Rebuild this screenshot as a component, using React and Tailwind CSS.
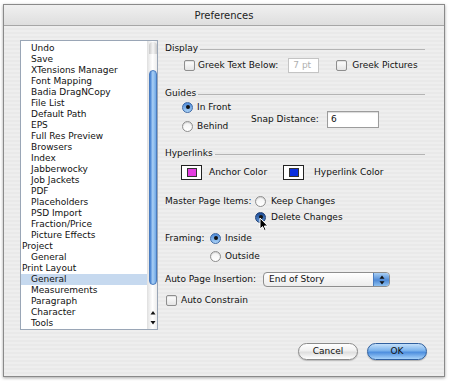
import React from 'react';

const listItems = [
  { label: 'Undo', indent: true },
  { label: 'Save', indent: true },
  { label: 'XTensions Manager', indent: true },
  { label: 'Font Mapping', indent: true },
  { label: 'Badia DragNCopy', indent: true },
  { label: 'File List', indent: true },
  { label: 'Default Path', indent: true },
  { label: 'EPS', indent: true },
  { label: 'Full Res Preview', indent: true },
  { label: 'Browsers', indent: true },
  { label: 'Index', indent: true },
  { label: 'Jabberwocky', indent: true },
  { label: 'Job Jackets', indent: true },
  { label: 'PDF', indent: true },
  { label: 'Placeholders', indent: true },
  { label: 'PSD Import', indent: true },
  { label: 'Fraction/Price', indent: true },
  { label: 'Picture Effects', indent: true },
  { label: 'Project', indent: false },
  { label: 'General', indent: true },
  { label: 'Print Layout', indent: false },
  { label: 'General', indent: true, selected: true },
  { label: 'Measurements', indent: true },
  { label: 'Paragraph', indent: true },
  { label: 'Character', indent: true },
  { label: 'Tools', indent: true },
];

function Checkbox() {
  return (
    <div className="w-[11px] h-[11px] shrink-0 rounded-[2px] border border-[#8e8e8e] bg-[linear-gradient(to_bottom,#ffffff,#e4e4e4)] shadow-[inset_0_1px_1px_rgba(0,0,0,0.12)]" />
  );
}

function Radio({ checked, pressed }) {
  if (checked) {
    return (
      <div
        className={
          'w-[11px] h-[11px] shrink-0 rounded-full border flex items-center justify-center ' +
          (pressed
            ? 'border-[#1f3f75] bg-[linear-gradient(to_bottom,#1d4c96,#5b8fd0)]'
            : 'border-[#3f6aa6] bg-[linear-gradient(to_bottom,#4e8ad8,#a9d1f6)]')
        }
      >
        <div className="w-[4px] h-[4px] rounded-full bg-[#111]" />
      </div>
    );
  }
  return (
    <div className="w-[11px] h-[11px] shrink-0 rounded-full border border-[#8e8e8e] bg-[linear-gradient(to_bottom,#f2f2f2,#ffffff)] shadow-[inset_0_1px_1px_rgba(0,0,0,0.15)]" />
  );
}

function SectionHeader({ title }) {
  return (
    <div className="flex items-center h-[16px]">
      <span>{title}</span>
      <div className="flex-1 h-px bg-[#b4b4b4] ml-[2px] mt-[3px]" />
    </div>
  );
}

function Swatch({ color }) {
  return (
    <div className="w-[21px] h-[15px] shrink-0 border border-[#222] bg-white flex items-center justify-center">
      <div className={'w-[10px] h-[9px] border border-[#333] ' + color} />
    </div>
  );
}

export default function App() {
  return (
    <div className="w-[450px] h-[381px] bg-white overflow-hidden relative text-[9px] leading-[11px] text-[#111] font-['DejaVu_Sans',sans-serif]">
      <div className="ml-[3px] mt-[4px] w-[442px] h-[373px] border border-[#8a8a8a] flex flex-col shadow-[0_1px_3px_rgba(0,0,0,0.35)]">
        {/* Title bar */}
        <div className="h-[21px] shrink-0 flex items-center justify-center border-b border-[#a6a6a6] bg-[linear-gradient(to_bottom,#f0f0f0,#dedede)] text-[10px] text-[#222]">
          Preferences
        </div>

        {/* Body */}
        <div className="flex-1 flex flex-col bg-[image:repeating-linear-gradient(to_bottom,#eeeeee_0px,#eeeeee_2px,#e9e9e9_2px,#e9e9e9_4px)]">
          <div className="flex items-start pt-[14px]">
            {/* Category list */}
            <div className="ml-[16px] w-[138px] h-[290px] shrink-0 border border-[#9aa6b6] bg-white flex">
              <div className="flex-1 pt-[2px]">
                {listItems.map((item, i) => (
                  <div
                    key={i}
                    className={
                      'h-[11px] leading-[11px] whitespace-nowrap ' +
                      (item.indent ? 'pl-[10px] ' : 'pl-[1px] ') +
                      (item.selected ? 'bg-[#c6d9ef]' : '')
                    }
                  >
                    {item.label}
                  </div>
                ))}
              </div>
              {/* Scrollbar */}
              <div className="w-[10px] shrink-0 flex flex-col items-center bg-[linear-gradient(to_right,#e6e6e6,#ffffff_50%,#ececec)] border-l border-[#e2e2e2]">
                <div className="mt-[1px] w-[8px] h-[12px] rounded-t-full bg-[linear-gradient(to_right,#c9c9c9,#f6f6f6_50%,#c9c9c9)]" />
                <div className="mt-[16px] w-[8px] h-[215px] rounded-full border border-[#4a7cc0] bg-[linear-gradient(to_right,#3f7cd0,#a8cff5_45%,#6fa8e6)]" />
                <div className="flex-1" />
                <svg width="6" height="16" viewBox="0 0 6 16" className="mb-[3px]">
                  <polygon points="3,1 5.5,4.5 0.5,4.5" fill="#111" />
                  <polygon points="0.5,11 5.5,11 3,14.5" fill="#111" />
                </svg>
              </div>
            </div>

            {/* Settings panel */}
            <div className="ml-[7px] w-[260px] flex flex-col">
              <SectionHeader title="Display" />
              <div className="mt-[1px] h-[16px] flex items-center">
                <div className="ml-[19px]">
                  <Checkbox />
                </div>
                <span className="ml-[3px]">Greek Text Below:</span>
                <div className="ml-[10px] w-[31px] h-[15px] border border-[#c4c4c4] bg-white flex items-center pl-[4px] text-[#b0b0b0]">
                  7 pt
                </div>
                <div className="ml-[17px]">
                  <Checkbox />
                </div>
                <span className="ml-[5px]">Greek Pictures</span>
              </div>

              <div className="mt-[12px]">
                <SectionHeader title="Guides" />
              </div>
              <div className="flex mt-[-1px]">
                <div className="ml-[17px] w-[69px] flex flex-col gap-[5px]">
                  <div className="h-[14px] flex items-center">
                    <Radio checked />
                    <span className="ml-[4px]">In Front</span>
                  </div>
                  <div className="h-[14px] flex items-center">
                    <Radio />
                    <span className="ml-[4px]">Behind</span>
                  </div>
                </div>
                <div className="self-end mb-[5px] flex items-center">
                  <span>Snap Distance:</span>
                  <div className="ml-[8px] w-[52px] h-[17px] border border-[#9c9c9c] bg-white flex items-center pl-[3px] shadow-[inset_0_1px_1px_rgba(0,0,0,0.15)]">
                    6
                  </div>
                </div>
              </div>

              <div className="mt-[12px]">
                <SectionHeader title="Hyperlinks" />
              </div>
              <div className="mt-[4px] h-[15px] flex items-center">
                <div className="ml-[16px]">
                  <Swatch color="bg-[#e43ee0]" />
                </div>
                <span className="ml-[7px]">Anchor Color</span>
                <div className="ml-[16px]">
                  <Swatch color="bg-[#0a2fe0]" />
                </div>
                <span className="ml-[10px]">Hyperlink Color</span>
              </div>

              <div className="mt-[14px] flex">
                <div className="w-[90px] h-[14px] flex items-center">Master Page Items:</div>
                <div className="flex flex-col gap-[2px]">
                  <div className="h-[14px] flex items-center">
                    <Radio />
                    <span className="ml-[5px]">Keep Changes</span>
                  </div>
                  <div className="h-[14px] flex items-center">
                    <Radio checked pressed />
                    <span className="ml-[5px]">Delete Changes</span>
                  </div>
                </div>
              </div>

              <div className="mt-[7px] flex">
                <div className="w-[45px] h-[14px] flex items-center">Framing:</div>
                <div className="flex flex-col gap-[4px]">
                  <div className="h-[14px] flex items-center">
                    <Radio checked />
                    <span className="ml-[4px]">Inside</span>
                  </div>
                  <div className="h-[14px] flex items-center">
                    <Radio />
                    <span className="ml-[4px]">Outside</span>
                  </div>
                </div>
              </div>

              <div className="mt-[9px] flex items-center h-[15px]">
                <div className="w-[98px]">Auto Page Insertion:</div>
                <div className="w-[127px] h-[15px] rounded-[4px] border border-[#8e8e8e] bg-[linear-gradient(to_bottom,#ffffff,#ececec)] flex items-center overflow-hidden">
                  <span className="flex-1 pl-[5px]">End of Story</span>
                  <div className="w-[16px] h-full flex items-center justify-center border-l border-[#4a7cc0] bg-[linear-gradient(to_bottom,#a8cff5,#4f8ad6_55%,#8cc0f0)]">
                    <svg width="6" height="10" viewBox="0 0 6 10">
                      <polygon points="3,0.5 5.5,3.8 0.5,3.8" fill="#111" />
                      <polygon points="0.5,6.2 5.5,6.2 3,9.5" fill="#111" />
                    </svg>
                  </div>
                </div>
              </div>

              <div className="mt-[6px] h-[14px] flex items-center">
                <div className="ml-[1px]">
                  <Checkbox />
                </div>
                <span className="ml-[4px]">Auto Constrain</span>
              </div>
            </div>
          </div>

          {/* Buttons */}
          <div className="mt-[13px] flex justify-end pr-[17px] gap-[9px]">
            <div className="w-[60px] h-[17px] rounded-full border border-[#8a8a8a] bg-[linear-gradient(to_bottom,#ffffff,#f0f0f0_45%,#dedede_55%,#ffffff)] flex items-center justify-center shadow-[0_1px_1px_rgba(0,0,0,0.2)]">
              Cancel
            </div>
            <div className="w-[60px] h-[17px] rounded-full border border-[#2f5f9e] bg-[linear-gradient(to_bottom,#c4e0fa,#7ab2ec_45%,#4d8ede_55%,#a6d2fa)] flex items-center justify-center shadow-[0_1px_1px_rgba(0,0,0,0.25)]">
              OK
            </div>
          </div>
        </div>
      </div>

      {/* Mouse pointer */}
      <svg width="10" height="15" viewBox="0 0 10 15" className="absolute left-[259px] top-[217px]">
        <polygon points="1,1 1,12 3.6,9.6 5.4,13.6 7,12.9 5.3,9 8.8,9" fill="#000" stroke="#fff" strokeWidth="1" />
      </svg>
    </div>
  );
}
